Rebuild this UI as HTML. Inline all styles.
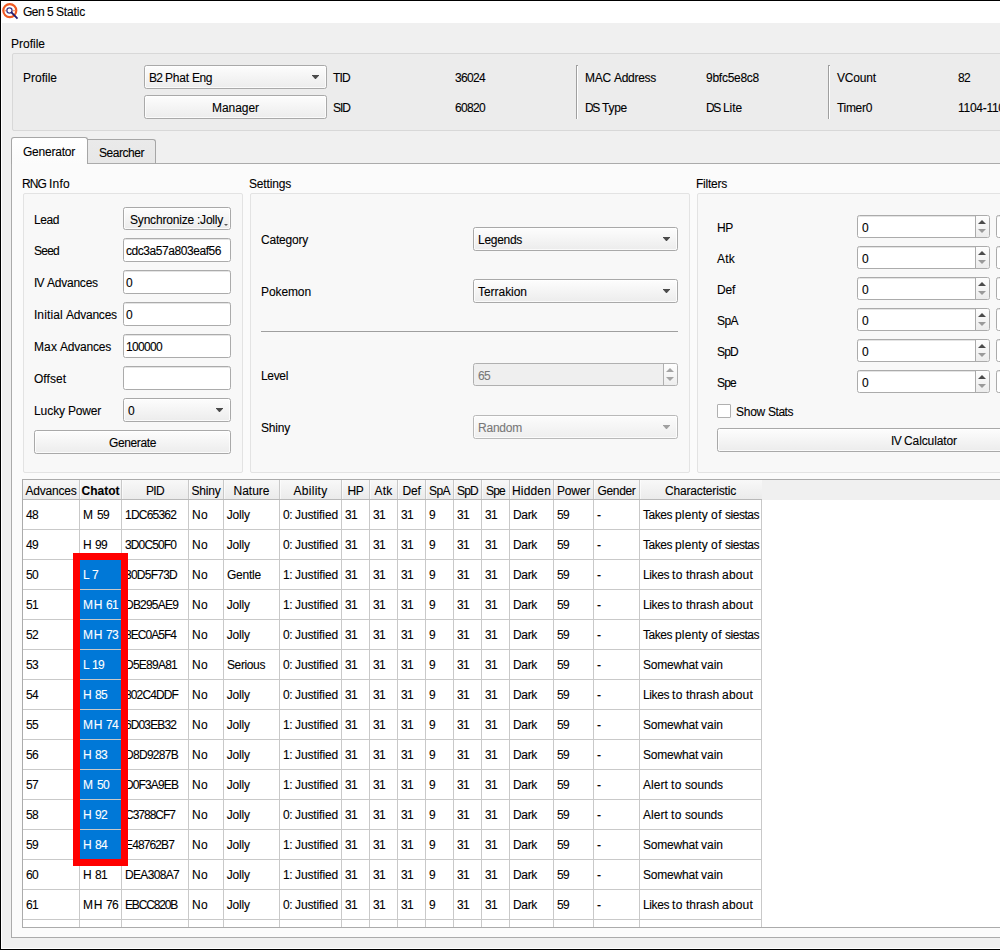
<!DOCTYPE html>
<html>
<head>
<meta charset="utf-8">
<title>Gen 5 Static</title>
<style>
html,body{margin:0;padding:0;}
body{width:1000px;height:950px;overflow:hidden;position:relative;background:#f0f0f0;font-family:"Liberation Sans",sans-serif;font-size:12px;color:#000;}
div{position:absolute;box-sizing:border-box;}
.t{line-height:16px;height:16px;white-space:nowrap;-webkit-text-stroke:0.1px currentColor;}
.t span{display:inline-block;height:16px;vertical-align:top;overflow:visible;}
.btn{border:1px solid #a9a9a9;border-radius:2.5px;background:linear-gradient(#fdfdfd,#ececec);box-shadow:inset 0 0 0 1px rgba(255,255,255,0.75);}
.edit{border:1px solid #ababab;border-radius:2.5px;background:#fff;box-shadow:inset 0 1px 0 #e4e4e4;}
.gb{border:1px solid #d8d8d8;border-radius:2px;background:#ececec;}
.gbp{border:1px solid #e3e3e3;border-radius:2px;background:#f8f8f8;}
.dis{border-color:#c6c6c6;background:linear-gradient(#f9f9f9,#efefef);}
.arr{width:0;height:0;border-left:4px solid transparent;border-right:4px solid transparent;border-top:4px solid #4b4b4b;}
.arr7{width:7px;height:4px;background:#4b4b4b;clip-path:polygon(0 0,7px 0,7px 0.6px,3.9px 4px,3.1px 4px,0 0.6px);}
.arru{width:0;height:0;border-left:4px solid transparent;border-right:4px solid transparent;border-bottom:4px solid #4b4b4b;}
.vl{width:1px;background:#c9c9c9;}
.hl{height:1px;background:#c9c9c9;}
</style>
</head>
<body>
<div class="" style="left:0px;top:0px;width:1000px;height:23px;background:#fff;"></div>
<div class="" style="left:0px;top:0px;width:1000px;height:1px;background:#000;"></div>
<div class="" style="left:1px;top:23px;width:1px;height:927px;background:#fff;"></div>
<div class="" style="left:0px;top:948px;width:1000px;height:1px;background:#fff;"></div>
<div class="" style="left:0px;top:949px;width:1000px;height:1px;background:#000;"></div>
<div class="" style="left:0px;top:0px;width:1px;height:950px;background:#000;"></div>
<svg style="position:absolute;left:0;top:0" width="24" height="24" viewBox="0 0 24 24"><circle cx="9.8" cy="10.6" r="6.5" fill="none" stroke="#f15a22" stroke-width="2.2"/><line x1="4.3" y1="10.6" x2="6.5" y2="10.6" stroke="#f7a078" stroke-width="1.5"/><line x1="12.8" y1="10.6" x2="15.2" y2="10.6" stroke="#f7a078" stroke-width="1.5"/><circle cx="9.47" cy="10.5" r="2.6" fill="#fff" stroke="#3d3889" stroke-width="1.25"/><line x1="11.5" y1="12.5" x2="16.9" y2="17.9" stroke="#221d70" stroke-width="1.8" stroke-linecap="square"/></svg>
<div class="t" style="top:4px;left:23.00px;"><span class="w" style="width:21px;letter-spacing:-0.561px">Gen</span><span class="sp" style="width:3px"></span><span class="w" style="width:6px;letter-spacing:-0.674px">5</span><span class="sp" style="width:3px"></span><span class="w" style="width:29px;letter-spacing:-0.169px">Static</span></div>
<div class="t" style="top:36px;left:11.02px;letter-spacing:-0.002px;">Profile</div>
<div class="gb" style="left:12px;top:53px;width:1100px;height:78px;"></div>
<div class="t" style="top:70px;left:23.02px;letter-spacing:-0.002px;">Profile</div>
<div class="btn" style="left:144px;top:65px;width:183px;height:24px;"></div>
<div class="t" style="top:70px;left:149.02px;"><span class="w" style="width:13px;letter-spacing:-0.839px">B2</span><span class="sp" style="width:3px"></span><span class="w" style="width:24px;letter-spacing:-0.171px">Phat</span><span class="sp" style="width:3px"></span><span class="w" style="width:20px;letter-spacing:-0.451px">Eng</span></div>
<div class="arr7" style="left:312px;top:75px;width:7px;height:4px;"></div>
<div class="btn" style="left:144px;top:95px;width:183px;height:24px;"></div>
<div class="t" style="top:100px;left:212.00px;letter-spacing:-0.052px;">Manager</div>
<div class="t" style="top:70px;left:333.00px;letter-spacing:-0.777px;">TID</div>
<div class="t" style="top:70px;left:455.00px;letter-spacing:-0.674px;">36024</div>
<div class="t" style="top:100px;left:333.00px;letter-spacing:-1.001px;">SID</div>
<div class="t" style="top:100px;left:455.00px;letter-spacing:-0.674px;">60820</div>
<div class="" style="left:576px;top:65px;width:1px;height:54px;background:#9f9f9f;"></div>
<div class="" style="left:577px;top:66px;width:1px;height:53px;background:#fff;"></div>
<div class="" style="left:577px;top:65px;width:1px;height:1px;background:#9f9f9f;"></div>
<div class="t" style="top:70px;left:585.02px;"><span class="w" style="width:26px;letter-spacing:-0.222px">MAC</span><span class="sp" style="width:3px"></span><span class="w" style="width:42px;letter-spacing:-0.289px">Address</span></div>
<div class="t" style="top:70px;left:706.00px;letter-spacing:-0.264px;">9bfc5e8c8</div>
<div class="t" style="top:100px;left:585.02px;"><span class="w" style="width:14px;letter-spacing:-1.335px">DS</span><span class="sp" style="width:3px"></span><span class="w" style="width:25px;letter-spacing:-0.254px">Type</span></div>
<div class="t" style="top:100px;left:706.02px;"><span class="w" style="width:14px;letter-spacing:-1.335px">DS</span><span class="sp" style="width:3px"></span><span class="w" style="width:19px;letter-spacing:-0.087px">Lite</span></div>
<div class="" style="left:828px;top:65px;width:1px;height:54px;background:#9f9f9f;"></div>
<div class="" style="left:829px;top:66px;width:1px;height:53px;background:#fff;"></div>
<div class="" style="left:829px;top:65px;width:1px;height:1px;background:#9f9f9f;"></div>
<div class="t" style="top:70px;left:836.95px;letter-spacing:-0.171px;">VCount</div>
<div class="t" style="top:70px;left:958.00px;letter-spacing:-0.674px;">82</div>
<div class="t" style="top:100px;left:837.00px;letter-spacing:-0.315px;">Timer0</div>
<div class="t" style="top:100px;left:958.09px;letter-spacing:-0.289px;">1104-1100</div>
<div class="" style="left:11px;top:163px;width:1100px;height:775px;background:#fbfbfb;border:1px solid #ababab;"></div>
<div class="" style="left:87px;top:139px;width:69px;height:25px;background:linear-gradient(#eaeaea,#e7e7e7);border:1px solid #a6a6a6;border-radius:0 3px 0 0;border-bottom:1px solid #ababab;"></div>
<div class="" style="left:11px;top:137px;width:77px;height:27px;background:linear-gradient(#ffffff,#fbfbfb);border:1px solid #a6a6a6;border-bottom:none;border-radius:3px 3px 0 0;"></div>
<div class="t" style="top:144px;left:23.00px;letter-spacing:-0.225px;">Generator</div>
<div class="t" style="top:145px;left:99.00px;letter-spacing:-0.461px;">Searcher</div>
<div class="t" style="top:176px;left:22.02px;"><span class="w" style="width:24px;letter-spacing:-0.889px">RNG</span><span class="sp" style="width:3px"></span><span class="w" style="width:21px;letter-spacing:0.246px">Info</span></div>
<div class="gbp" style="left:23px;top:193px;width:220px;height:280px;"></div>
<div class="t" style="top:212px;left:34.02px;letter-spacing:-0.424px;">Lead</div>
<div class="t" style="top:243px;left:34.00px;letter-spacing:-0.756px;">Seed</div>
<div class="t" style="top:275px;left:33.89px;"><span class="w" style="width:10px;letter-spacing:-0.669px">IV</span><span class="sp" style="width:3px"></span><span class="w" style="width:51px;letter-spacing:-0.212px">Advances</span></div>
<div class="t" style="top:307px;left:33.89px;"><span class="w" style="width:29px;letter-spacing:0.141px">Initial</span><span class="sp" style="width:3px"></span><span class="w" style="width:51px;letter-spacing:-0.212px">Advances</span></div>
<div class="t" style="top:339px;left:34.02px;"><span class="w" style="width:23px;letter-spacing:0.110px">Max</span><span class="sp" style="width:3px"></span><span class="w" style="width:51px;letter-spacing:-0.212px">Advances</span></div>
<div class="t" style="top:371px;left:34.00px;letter-spacing:0.035px;">Offset</div>
<div class="t" style="top:403px;left:34.02px;"><span class="w" style="width:31px;letter-spacing:-0.070px">Lucky</span><span class="sp" style="width:3px"></span><span class="w" style="width:33px;letter-spacing:-0.203px">Power</span></div>
<div class="btn" style="left:123px;top:207px;width:108px;height:23px;"></div>
<div class="t" style="top:212px;left:130.00px;"><span class="w" style="width:64px;letter-spacing:-0.185px">Synchronize</span><span class="sp" style="width:3px"></span><span class="w" style="width:26px;letter-spacing:-0.223px">:Jolly</span></div>
<div class="arr" style="left:223.5px;top:223.5px;width:0px;height:0px;border-left-width:2.5px;border-right-width:2.5px;border-top-width:2.5px;border-top-color:#5a5a5a;"></div>
<div class="edit" style="left:123px;top:238px;width:108px;height:24px;"></div>
<div class="t" style="top:243px;left:126.00px;letter-spacing:-0.443px;">cdc3a57a803eaf56</div>
<div class="edit" style="left:123px;top:270px;width:108px;height:24px;"></div>
<div class="t" style="top:275px;left:126.00px;letter-spacing:-0.674px;">0</div>
<div class="edit" style="left:123px;top:302px;width:108px;height:24px;"></div>
<div class="t" style="top:307px;left:126.00px;letter-spacing:-0.674px;">0</div>
<div class="edit" style="left:123px;top:334px;width:108px;height:24px;"></div>
<div class="t" style="top:339px;left:126.09px;letter-spacing:-0.674px;">100000</div>
<div class="edit" style="left:123px;top:366px;width:108px;height:24px;"></div>
<div class="btn" style="left:123px;top:398px;width:108px;height:24px;"></div>
<div class="t" style="top:403px;left:128.00px;letter-spacing:-0.674px;">0</div>
<div class="arr7" style="left:216px;top:408px;width:7px;height:4px;"></div>
<div class="btn" style="left:34px;top:430px;width:197px;height:24px;"></div>
<div class="t" style="top:435px;left:109.00px;letter-spacing:-0.379px;">Generate</div>
<div class="t" style="top:176px;left:249.00px;letter-spacing:-0.170px;">Settings</div>
<div class="gbp" style="left:250px;top:193px;width:440px;height:280px;"></div>
<div class="t" style="top:232px;left:261.00px;letter-spacing:-0.211px;">Category</div>
<div class="t" style="top:284px;left:261.02px;letter-spacing:-0.099px;">Pokemon</div>
<div class="t" style="top:368px;left:261.02px;letter-spacing:-0.338px;">Level</div>
<div class="t" style="top:420px;left:261.00px;letter-spacing:-0.204px;">Shiny</div>
<div class="btn" style="left:473px;top:227px;width:205px;height:24px;"></div>
<div class="t" style="top:232px;left:478.02px;letter-spacing:-0.292px;">Legends</div>
<div class="arr7" style="left:663px;top:237px;width:7px;height:4px;"></div>
<div class="btn" style="left:473px;top:279px;width:205px;height:24px;"></div>
<div class="t" style="top:284px;left:478.00px;letter-spacing:-0.039px;">Terrakion</div>
<div class="arr7" style="left:663px;top:289px;width:7px;height:4px;"></div>
<div class="" style="left:261px;top:331px;width:417px;height:1px;background:#9f9f9f;"></div>
<div class="edit" style="left:473px;top:363px;width:205px;height:23px;background:#efefef;box-shadow:none;border-color:#b0b0b0;"></div>
<div class="t" style="top:368px;left:478.00px;color:#787878;letter-spacing:-0.674px;">65</div>
<div class="" style="left:664px;top:364px;width:13px;height:21px;background:linear-gradient(#fefefe,#eeeeee);border-radius:0 2px 2px 0;"></div>
<div class="" style="left:663px;top:364px;width:1px;height:21px;background:#b0b0b0;"></div>
<div class="arru" style="left:666px;top:368px;width:0px;height:0px;border-bottom-color:#a4a4a4;"></div>
<div class="arr" style="left:666px;top:377px;width:0px;height:0px;border-top-color:#a4a4a4;"></div>
<div class="btn" style="left:473px;top:415px;width:205px;height:24px;border-color:#b9b9b9;background:linear-gradient(#fcfcfc,#eeeeee);"></div>
<div class="t" style="top:420px;left:478.02px;color:#787878;letter-spacing:-0.226px;">Random</div>
<div class="arr7" style="left:663px;top:425px;width:7px;height:4px;background:#a0a0a0;"></div>
<div class="t" style="top:176px;left:696.02px;letter-spacing:-0.238px;">Filters</div>
<div class="gbp" style="left:697px;top:193px;width:500px;height:280px;"></div>
<div class="t" style="top:220px;left:717.02px;letter-spacing:-0.335px;">HP</div>
<div class="edit" style="left:857px;top:215px;width:133px;height:23px;"></div>
<div class="" style="left:976px;top:216px;width:13px;height:21px;background:linear-gradient(#fdfdfd,#ececec);border-radius:0 2px 2px 0;"></div>
<div class="" style="left:975px;top:216px;width:1px;height:21px;background:#ababab;"></div>
<div class="arru" style="left:978px;top:220px;width:0px;height:0px;"></div>
<div class="arr" style="left:978px;top:229px;width:0px;height:0px;border-top-color:#9a9a9a;"></div>
<div class="t" style="top:220px;left:862.00px;letter-spacing:-0.674px;">0</div>
<div class="edit" style="left:996px;top:215px;width:133px;height:23px;"></div>
<div class="t" style="top:251px;left:716.98px;letter-spacing:0.221px;">Atk</div>
<div class="edit" style="left:857px;top:246px;width:133px;height:23px;"></div>
<div class="" style="left:976px;top:247px;width:13px;height:21px;background:linear-gradient(#fdfdfd,#ececec);border-radius:0 2px 2px 0;"></div>
<div class="" style="left:975px;top:247px;width:1px;height:21px;background:#ababab;"></div>
<div class="arru" style="left:978px;top:251px;width:0px;height:0px;"></div>
<div class="arr" style="left:978px;top:260px;width:0px;height:0px;border-top-color:#9a9a9a;"></div>
<div class="t" style="top:251px;left:862.00px;letter-spacing:-0.674px;">0</div>
<div class="edit" style="left:996px;top:246px;width:133px;height:23px;"></div>
<div class="t" style="top:282px;left:717.02px;letter-spacing:-0.225px;">Def</div>
<div class="edit" style="left:857px;top:277px;width:133px;height:23px;"></div>
<div class="" style="left:976px;top:278px;width:13px;height:21px;background:linear-gradient(#fdfdfd,#ececec);border-radius:0 2px 2px 0;"></div>
<div class="" style="left:975px;top:278px;width:1px;height:21px;background:#ababab;"></div>
<div class="arru" style="left:978px;top:282px;width:0px;height:0px;"></div>
<div class="arr" style="left:978px;top:291px;width:0px;height:0px;border-top-color:#9a9a9a;"></div>
<div class="t" style="top:282px;left:862.00px;letter-spacing:-0.674px;">0</div>
<div class="edit" style="left:996px;top:277px;width:133px;height:23px;"></div>
<div class="t" style="top:313px;left:717.00px;letter-spacing:-0.561px;">SpA</div>
<div class="edit" style="left:857px;top:308px;width:133px;height:23px;"></div>
<div class="" style="left:976px;top:309px;width:13px;height:21px;background:linear-gradient(#fdfdfd,#ececec);border-radius:0 2px 2px 0;"></div>
<div class="" style="left:975px;top:309px;width:1px;height:21px;background:#ababab;"></div>
<div class="arru" style="left:978px;top:313px;width:0px;height:0px;"></div>
<div class="arr" style="left:978px;top:322px;width:0px;height:0px;border-top-color:#9a9a9a;"></div>
<div class="t" style="top:313px;left:862.00px;letter-spacing:-0.674px;">0</div>
<div class="edit" style="left:996px;top:308px;width:133px;height:23px;"></div>
<div class="t" style="top:344px;left:717.00px;letter-spacing:-0.781px;">SpD</div>
<div class="edit" style="left:857px;top:339px;width:133px;height:23px;"></div>
<div class="" style="left:976px;top:340px;width:13px;height:21px;background:linear-gradient(#fdfdfd,#ececec);border-radius:0 2px 2px 0;"></div>
<div class="" style="left:975px;top:340px;width:1px;height:21px;background:#ababab;"></div>
<div class="arru" style="left:978px;top:344px;width:0px;height:0px;"></div>
<div class="arr" style="left:978px;top:353px;width:0px;height:0px;border-top-color:#9a9a9a;"></div>
<div class="t" style="top:344px;left:862.00px;letter-spacing:-0.674px;">0</div>
<div class="edit" style="left:996px;top:339px;width:133px;height:23px;"></div>
<div class="t" style="top:375px;left:717.00px;letter-spacing:-0.784px;">Spe</div>
<div class="edit" style="left:857px;top:370px;width:133px;height:23px;"></div>
<div class="" style="left:976px;top:371px;width:13px;height:21px;background:linear-gradient(#fdfdfd,#ececec);border-radius:0 2px 2px 0;"></div>
<div class="" style="left:975px;top:371px;width:1px;height:21px;background:#ababab;"></div>
<div class="arru" style="left:978px;top:375px;width:0px;height:0px;"></div>
<div class="arr" style="left:978px;top:384px;width:0px;height:0px;border-top-color:#9a9a9a;"></div>
<div class="t" style="top:375px;left:862.00px;letter-spacing:-0.674px;">0</div>
<div class="edit" style="left:996px;top:370px;width:133px;height:23px;"></div>
<div class="" style="left:717px;top:404px;width:14px;height:14px;background:#fff;border:1px solid #b0b0b0;border-radius:1px;"></div>
<div class="t" style="top:404px;left:736.00px;"><span class="w" style="width:29px;letter-spacing:-0.254px">Show</span><span class="sp" style="width:3px"></span><span class="w" style="width:25px;letter-spacing:-0.469px">Stats</span></div>
<div class="btn" style="left:717px;top:428px;width:414px;height:24px;"></div>
<div class="t" style="top:433px;left:891.00px;"><span class="w" style="width:10px;letter-spacing:-0.669px">IV</span><span class="sp" style="width:3px"></span><span class="w" style="width:53px;letter-spacing:-0.102px">Calculator</span></div>
<div class="" style="left:22px;top:479px;width:1100px;height:449px;background:#fff;border:1px solid #ababab;"></div>
<div class="" style="left:23px;top:480px;width:739px;height:19px;background:linear-gradient(#f8f8f8,#ebebeb);"></div>
<div class="" style="left:762px;top:480px;width:238px;height:20px;background:#f0f0f0;"></div>
<div class="" style="left:23px;top:499px;width:739px;height:1px;background:#b9b9b9;"></div>
<div class="" style="left:79px;top:480px;width:1px;height:19px;background:#c8c8c8;"></div>
<div class="" style="left:80px;top:480px;width:1px;height:19px;background:rgba(255,255,255,0.6);"></div>
<div class="t" style="top:483px;left:25.50px;letter-spacing:-0.212px;">Advances</div>
<div class="" style="left:121px;top:480px;width:1px;height:19px;background:#c8c8c8;"></div>
<div class="" style="left:122px;top:480px;width:1px;height:19px;background:rgba(255,255,255,0.6);"></div>
<div class="t" style="top:483px;left:81.50px;font-weight:bold;letter-spacing:0.001px;">Chatot</div>
<div class="" style="left:188px;top:480px;width:1px;height:19px;background:#c8c8c8;"></div>
<div class="" style="left:189px;top:480px;width:1px;height:19px;background:rgba(255,255,255,0.6);"></div>
<div class="t" style="top:483px;left:146.00px;letter-spacing:-0.668px;">PID</div>
<div class="" style="left:223px;top:480px;width:1px;height:19px;background:#c8c8c8;"></div>
<div class="" style="left:224px;top:480px;width:1px;height:19px;background:rgba(255,255,255,0.6);"></div>
<div class="t" style="top:483px;left:191.50px;letter-spacing:-0.204px;">Shiny</div>
<div class="" style="left:279px;top:480px;width:1px;height:19px;background:#c8c8c8;"></div>
<div class="" style="left:280px;top:480px;width:1px;height:19px;background:rgba(255,255,255,0.6);"></div>
<div class="t" style="top:483px;left:233.50px;letter-spacing:-0.003px;">Nature</div>
<div class="" style="left:341px;top:480px;width:1px;height:19px;background:#c8c8c8;"></div>
<div class="" style="left:342px;top:480px;width:1px;height:19px;background:rgba(255,255,255,0.6);"></div>
<div class="t" style="top:483px;left:293.50px;letter-spacing:0.284px;">Ability</div>
<div class="" style="left:369px;top:480px;width:1px;height:19px;background:#c8c8c8;"></div>
<div class="" style="left:370px;top:480px;width:1px;height:19px;background:rgba(255,255,255,0.6);"></div>
<div class="t" style="top:483px;left:347.50px;letter-spacing:-0.335px;">HP</div>
<div class="" style="left:397px;top:480px;width:1px;height:19px;background:#c8c8c8;"></div>
<div class="" style="left:398px;top:480px;width:1px;height:19px;background:rgba(255,255,255,0.6);"></div>
<div class="t" style="top:483px;left:374.50px;letter-spacing:0.221px;">Atk</div>
<div class="" style="left:425px;top:480px;width:1px;height:19px;background:#c8c8c8;"></div>
<div class="" style="left:426px;top:480px;width:1px;height:19px;background:rgba(255,255,255,0.6);"></div>
<div class="t" style="top:483px;left:402.50px;letter-spacing:-0.225px;">Def</div>
<div class="" style="left:453px;top:480px;width:1px;height:19px;background:#c8c8c8;"></div>
<div class="" style="left:454px;top:480px;width:1px;height:19px;background:rgba(255,255,255,0.6);"></div>
<div class="t" style="top:483px;left:429.00px;letter-spacing:-0.561px;">SpA</div>
<div class="" style="left:481px;top:480px;width:1px;height:19px;background:#c8c8c8;"></div>
<div class="" style="left:482px;top:480px;width:1px;height:19px;background:rgba(255,255,255,0.6);"></div>
<div class="t" style="top:483px;left:457.00px;letter-spacing:-0.781px;">SpD</div>
<div class="" style="left:509px;top:480px;width:1px;height:19px;background:#c8c8c8;"></div>
<div class="" style="left:510px;top:480px;width:1px;height:19px;background:rgba(255,255,255,0.6);"></div>
<div class="t" style="top:483px;left:486.00px;letter-spacing:-0.784px;">Spe</div>
<div class="" style="left:553px;top:480px;width:1px;height:19px;background:#c8c8c8;"></div>
<div class="" style="left:554px;top:480px;width:1px;height:19px;background:rgba(255,255,255,0.6);"></div>
<div class="t" style="top:483px;left:512.00px;letter-spacing:0.162px;">Hidden</div>
<div class="" style="left:593px;top:480px;width:1px;height:19px;background:#c8c8c8;"></div>
<div class="" style="left:594px;top:480px;width:1px;height:19px;background:rgba(255,255,255,0.6);"></div>
<div class="t" style="top:483px;left:557.00px;letter-spacing:-0.203px;">Power</div>
<div class="" style="left:639px;top:480px;width:1px;height:19px;background:#c8c8c8;"></div>
<div class="" style="left:640px;top:480px;width:1px;height:19px;background:rgba(255,255,255,0.6);"></div>
<div class="t" style="top:483px;left:597.50px;letter-spacing:-0.338px;">Gender</div>
<div class="t" style="top:483px;left:665.00px;letter-spacing:-0.168px;">Characteristic</div>
<div class="vl" style="left:79px;top:500px;width:1px;height:427px;"></div>
<div class="vl" style="left:121px;top:500px;width:1px;height:427px;"></div>
<div class="vl" style="left:188px;top:500px;width:1px;height:427px;"></div>
<div class="vl" style="left:223px;top:500px;width:1px;height:427px;"></div>
<div class="vl" style="left:279px;top:500px;width:1px;height:427px;"></div>
<div class="vl" style="left:341px;top:500px;width:1px;height:427px;"></div>
<div class="vl" style="left:369px;top:500px;width:1px;height:427px;"></div>
<div class="vl" style="left:397px;top:500px;width:1px;height:427px;"></div>
<div class="vl" style="left:425px;top:500px;width:1px;height:427px;"></div>
<div class="vl" style="left:453px;top:500px;width:1px;height:427px;"></div>
<div class="vl" style="left:481px;top:500px;width:1px;height:427px;"></div>
<div class="vl" style="left:509px;top:500px;width:1px;height:427px;"></div>
<div class="vl" style="left:553px;top:500px;width:1px;height:427px;"></div>
<div class="vl" style="left:593px;top:500px;width:1px;height:427px;"></div>
<div class="vl" style="left:639px;top:500px;width:1px;height:427px;"></div>
<div class="vl" style="left:761px;top:500px;width:1px;height:427px;"></div>
<div class="hl" style="left:23px;top:529px;width:739px;height:1px;"></div>
<div class="hl" style="left:23px;top:559px;width:739px;height:1px;"></div>
<div class="hl" style="left:23px;top:589px;width:739px;height:1px;"></div>
<div class="hl" style="left:23px;top:619px;width:739px;height:1px;"></div>
<div class="hl" style="left:23px;top:649px;width:739px;height:1px;"></div>
<div class="hl" style="left:23px;top:679px;width:739px;height:1px;"></div>
<div class="hl" style="left:23px;top:709px;width:739px;height:1px;"></div>
<div class="hl" style="left:23px;top:739px;width:739px;height:1px;"></div>
<div class="hl" style="left:23px;top:769px;width:739px;height:1px;"></div>
<div class="hl" style="left:23px;top:799px;width:739px;height:1px;"></div>
<div class="hl" style="left:23px;top:829px;width:739px;height:1px;"></div>
<div class="hl" style="left:23px;top:859px;width:739px;height:1px;"></div>
<div class="hl" style="left:23px;top:889px;width:739px;height:1px;"></div>
<div class="hl" style="left:23px;top:919px;width:739px;height:1px;"></div>
<div class="" style="left:80px;top:560px;width:41px;height:29px;background:#0078d7;"></div>
<div class="" style="left:80px;top:590px;width:41px;height:29px;background:#0078d7;"></div>
<div class="" style="left:80px;top:620px;width:41px;height:29px;background:#0078d7;"></div>
<div class="" style="left:80px;top:650px;width:41px;height:29px;background:#0078d7;"></div>
<div class="" style="left:80px;top:680px;width:41px;height:29px;background:#0078d7;"></div>
<div class="" style="left:80px;top:710px;width:41px;height:29px;background:#0078d7;"></div>
<div class="" style="left:80px;top:740px;width:41px;height:29px;background:#0078d7;"></div>
<div class="" style="left:80px;top:770px;width:41px;height:29px;background:#0078d7;"></div>
<div class="" style="left:80px;top:800px;width:41px;height:29px;background:#0078d7;"></div>
<div class="" style="left:80px;top:830px;width:41px;height:29px;background:#0078d7;"></div>
<div class="t" style="top:507px;left:26.00px;letter-spacing:-0.674px;">48</div>
<div class="t" style="top:507px;left:83.02px;"><span class="w" style="width:11px;letter-spacing:1.004px">M</span><span class="sp" style="width:3px"></span><span class="w" style="width:12px;letter-spacing:-0.674px">59</span></div>
<div class="t" style="top:507px;left:125.09px;letter-spacing:-0.797px;">1DC65362</div>
<div class="t" style="top:507px;left:192.02px;letter-spacing:0.330px;">No</div>
<div class="t" style="top:507px;left:226.81px;letter-spacing:-0.201px;">Jolly</div>
<div class="t" style="top:507px;left:283.00px;"><span class="w" style="width:9px;letter-spacing:-0.504px">0:</span><span class="sp" style="width:3px"></span><span class="w" style="width:43px;letter-spacing:-0.113px">Justified</span></div>
<div class="t" style="top:507px;left:345.00px;letter-spacing:-0.674px;">31</div>
<div class="t" style="top:507px;left:373.00px;letter-spacing:-0.674px;">31</div>
<div class="t" style="top:507px;left:401.00px;letter-spacing:-0.674px;">31</div>
<div class="t" style="top:507px;left:429.00px;letter-spacing:-0.674px;">9</div>
<div class="t" style="top:507px;left:457.00px;letter-spacing:-0.674px;">31</div>
<div class="t" style="top:507px;left:485.00px;letter-spacing:-0.674px;">31</div>
<div class="t" style="top:507px;left:513.02px;letter-spacing:-0.334px;">Dark</div>
<div class="t" style="top:507px;left:557.00px;letter-spacing:-0.674px;">59</div>
<div class="t" style="top:507px;left:597.00px;letter-spacing:1.004px;">-</div>
<div class="t" style="top:507px;left:643.00px;"><span class="w" style="width:29px;letter-spacing:-0.470px">Takes</span><span class="sp" style="width:3px"></span><span class="w" style="width:33px;letter-spacing:0.163px">plenty</span><span class="sp" style="width:3px"></span><span class="w" style="width:11px;letter-spacing:0.496px">of</span><span class="sp" style="width:3px"></span><span class="w" style="width:34px;letter-spacing:-0.478px">siestas</span></div>
<div class="t" style="top:537px;left:26.00px;letter-spacing:-0.674px;">49</div>
<div class="t" style="top:537px;left:83.02px;"><span class="w" style="width:9px;letter-spacing:0.334px">H</span><span class="sp" style="width:3px"></span><span class="w" style="width:12px;letter-spacing:-0.674px">99</span></div>
<div class="t" style="top:537px;left:125.00px;letter-spacing:-0.879px;">3D0C50F0</div>
<div class="t" style="top:537px;left:192.02px;letter-spacing:0.330px;">No</div>
<div class="t" style="top:537px;left:226.81px;letter-spacing:-0.201px;">Jolly</div>
<div class="t" style="top:537px;left:283.00px;"><span class="w" style="width:9px;letter-spacing:-0.504px">0:</span><span class="sp" style="width:3px"></span><span class="w" style="width:43px;letter-spacing:-0.113px">Justified</span></div>
<div class="t" style="top:537px;left:345.00px;letter-spacing:-0.674px;">31</div>
<div class="t" style="top:537px;left:373.00px;letter-spacing:-0.674px;">31</div>
<div class="t" style="top:537px;left:401.00px;letter-spacing:-0.674px;">31</div>
<div class="t" style="top:537px;left:429.00px;letter-spacing:-0.674px;">9</div>
<div class="t" style="top:537px;left:457.00px;letter-spacing:-0.674px;">31</div>
<div class="t" style="top:537px;left:485.00px;letter-spacing:-0.674px;">31</div>
<div class="t" style="top:537px;left:513.02px;letter-spacing:-0.334px;">Dark</div>
<div class="t" style="top:537px;left:557.00px;letter-spacing:-0.674px;">59</div>
<div class="t" style="top:537px;left:597.00px;letter-spacing:1.004px;">-</div>
<div class="t" style="top:537px;left:643.00px;"><span class="w" style="width:29px;letter-spacing:-0.470px">Takes</span><span class="sp" style="width:3px"></span><span class="w" style="width:33px;letter-spacing:0.163px">plenty</span><span class="sp" style="width:3px"></span><span class="w" style="width:11px;letter-spacing:0.496px">of</span><span class="sp" style="width:3px"></span><span class="w" style="width:34px;letter-spacing:-0.478px">siestas</span></div>
<div class="t" style="top:567px;left:26.00px;letter-spacing:-0.674px;">50</div>
<div class="t" style="top:567px;left:83.02px;color:#fff;"><span class="w" style="width:6px;letter-spacing:-0.674px">L</span><span class="sp" style="width:3px"></span><span class="w" style="width:6px;letter-spacing:-0.674px">7</span></div>
<div class="t" style="top:567px;left:125.00px;letter-spacing:-0.754px;">30D5F73D</div>
<div class="t" style="top:567px;left:192.02px;letter-spacing:0.330px;">No</div>
<div class="t" style="top:567px;left:227.00px;letter-spacing:-0.226px;">Gentle</div>
<div class="t" style="top:567px;left:283.09px;"><span class="w" style="width:9px;letter-spacing:-0.504px">1:</span><span class="sp" style="width:3px"></span><span class="w" style="width:43px;letter-spacing:-0.113px">Justified</span></div>
<div class="t" style="top:567px;left:345.00px;letter-spacing:-0.674px;">31</div>
<div class="t" style="top:567px;left:373.00px;letter-spacing:-0.674px;">31</div>
<div class="t" style="top:567px;left:401.00px;letter-spacing:-0.674px;">31</div>
<div class="t" style="top:567px;left:429.00px;letter-spacing:-0.674px;">9</div>
<div class="t" style="top:567px;left:457.00px;letter-spacing:-0.674px;">31</div>
<div class="t" style="top:567px;left:485.00px;letter-spacing:-0.674px;">31</div>
<div class="t" style="top:567px;left:513.02px;letter-spacing:-0.334px;">Dark</div>
<div class="t" style="top:567px;left:557.00px;letter-spacing:-0.674px;">59</div>
<div class="t" style="top:567px;left:597.00px;letter-spacing:1.004px;">-</div>
<div class="t" style="top:567px;left:643.02px;"><span class="w" style="width:26px;letter-spacing:-0.403px">Likes</span><span class="sp" style="width:3px"></span><span class="w" style="width:11px;letter-spacing:0.496px">to</span><span class="sp" style="width:3px"></span><span class="w" style="width:33px;letter-spacing:-0.059px">thrash</span><span class="sp" style="width:3px"></span><span class="w" style="width:31px;letter-spacing:0.194px">about</span></div>
<div class="t" style="top:597px;left:26.00px;letter-spacing:-0.674px;">51</div>
<div class="t" style="top:597px;left:83.02px;color:#fff;"><span class="w" style="width:20px;letter-spacing:0.669px">MH</span><span class="sp" style="width:3px"></span><span class="w" style="width:12px;letter-spacing:-0.674px">61</span></div>
<div class="t" style="top:597px;left:125.02px;letter-spacing:-0.797px;">DB295AE9</div>
<div class="t" style="top:597px;left:192.02px;letter-spacing:0.330px;">No</div>
<div class="t" style="top:597px;left:226.81px;letter-spacing:-0.201px;">Jolly</div>
<div class="t" style="top:597px;left:283.09px;"><span class="w" style="width:9px;letter-spacing:-0.504px">1:</span><span class="sp" style="width:3px"></span><span class="w" style="width:43px;letter-spacing:-0.113px">Justified</span></div>
<div class="t" style="top:597px;left:345.00px;letter-spacing:-0.674px;">31</div>
<div class="t" style="top:597px;left:373.00px;letter-spacing:-0.674px;">31</div>
<div class="t" style="top:597px;left:401.00px;letter-spacing:-0.674px;">31</div>
<div class="t" style="top:597px;left:429.00px;letter-spacing:-0.674px;">9</div>
<div class="t" style="top:597px;left:457.00px;letter-spacing:-0.674px;">31</div>
<div class="t" style="top:597px;left:485.00px;letter-spacing:-0.674px;">31</div>
<div class="t" style="top:597px;left:513.02px;letter-spacing:-0.334px;">Dark</div>
<div class="t" style="top:597px;left:557.00px;letter-spacing:-0.674px;">59</div>
<div class="t" style="top:597px;left:597.00px;letter-spacing:1.004px;">-</div>
<div class="t" style="top:597px;left:643.02px;"><span class="w" style="width:26px;letter-spacing:-0.403px">Likes</span><span class="sp" style="width:3px"></span><span class="w" style="width:11px;letter-spacing:0.496px">to</span><span class="sp" style="width:3px"></span><span class="w" style="width:33px;letter-spacing:-0.059px">thrash</span><span class="sp" style="width:3px"></span><span class="w" style="width:31px;letter-spacing:0.194px">about</span></div>
<div class="t" style="top:627px;left:26.00px;letter-spacing:-0.674px;">52</div>
<div class="t" style="top:627px;left:83.02px;color:#fff;"><span class="w" style="width:20px;letter-spacing:0.669px">MH</span><span class="sp" style="width:3px"></span><span class="w" style="width:12px;letter-spacing:-0.674px">73</span></div>
<div class="t" style="top:627px;left:125.00px;letter-spacing:-0.962px;">8EC0A5F4</div>
<div class="t" style="top:627px;left:192.02px;letter-spacing:0.330px;">No</div>
<div class="t" style="top:627px;left:226.81px;letter-spacing:-0.201px;">Jolly</div>
<div class="t" style="top:627px;left:283.00px;"><span class="w" style="width:9px;letter-spacing:-0.504px">0:</span><span class="sp" style="width:3px"></span><span class="w" style="width:43px;letter-spacing:-0.113px">Justified</span></div>
<div class="t" style="top:627px;left:345.00px;letter-spacing:-0.674px;">31</div>
<div class="t" style="top:627px;left:373.00px;letter-spacing:-0.674px;">31</div>
<div class="t" style="top:627px;left:401.00px;letter-spacing:-0.674px;">31</div>
<div class="t" style="top:627px;left:429.00px;letter-spacing:-0.674px;">9</div>
<div class="t" style="top:627px;left:457.00px;letter-spacing:-0.674px;">31</div>
<div class="t" style="top:627px;left:485.00px;letter-spacing:-0.674px;">31</div>
<div class="t" style="top:627px;left:513.02px;letter-spacing:-0.334px;">Dark</div>
<div class="t" style="top:627px;left:557.00px;letter-spacing:-0.674px;">59</div>
<div class="t" style="top:627px;left:597.00px;letter-spacing:1.004px;">-</div>
<div class="t" style="top:627px;left:643.00px;"><span class="w" style="width:29px;letter-spacing:-0.470px">Takes</span><span class="sp" style="width:3px"></span><span class="w" style="width:33px;letter-spacing:0.163px">plenty</span><span class="sp" style="width:3px"></span><span class="w" style="width:11px;letter-spacing:0.496px">of</span><span class="sp" style="width:3px"></span><span class="w" style="width:34px;letter-spacing:-0.478px">siestas</span></div>
<div class="t" style="top:657px;left:26.00px;letter-spacing:-0.674px;">53</div>
<div class="t" style="top:657px;left:83.02px;color:#fff;"><span class="w" style="width:6px;letter-spacing:-0.674px">L</span><span class="sp" style="width:3px"></span><span class="w" style="width:12px;letter-spacing:-0.674px">19</span></div>
<div class="t" style="top:657px;left:125.02px;letter-spacing:-0.755px;">D5E89A81</div>
<div class="t" style="top:657px;left:192.02px;letter-spacing:0.330px;">No</div>
<div class="t" style="top:657px;left:227.00px;letter-spacing:-0.384px;">Serious</div>
<div class="t" style="top:657px;left:283.00px;"><span class="w" style="width:9px;letter-spacing:-0.504px">0:</span><span class="sp" style="width:3px"></span><span class="w" style="width:43px;letter-spacing:-0.113px">Justified</span></div>
<div class="t" style="top:657px;left:345.00px;letter-spacing:-0.674px;">31</div>
<div class="t" style="top:657px;left:373.00px;letter-spacing:-0.674px;">31</div>
<div class="t" style="top:657px;left:401.00px;letter-spacing:-0.674px;">31</div>
<div class="t" style="top:657px;left:429.00px;letter-spacing:-0.674px;">9</div>
<div class="t" style="top:657px;left:457.00px;letter-spacing:-0.674px;">31</div>
<div class="t" style="top:657px;left:485.00px;letter-spacing:-0.674px;">31</div>
<div class="t" style="top:657px;left:513.02px;letter-spacing:-0.334px;">Dark</div>
<div class="t" style="top:657px;left:557.00px;letter-spacing:-0.674px;">59</div>
<div class="t" style="top:657px;left:597.00px;letter-spacing:1.004px;">-</div>
<div class="t" style="top:657px;left:643.00px;"><span class="w" style="width:55px;letter-spacing:-0.212px">Somewhat</span><span class="sp" style="width:3px"></span><span class="w" style="width:22px;letter-spacing:-0.003px">vain</span></div>
<div class="t" style="top:687px;left:26.00px;letter-spacing:-0.674px;">54</div>
<div class="t" style="top:687px;left:83.02px;color:#fff;"><span class="w" style="width:9px;letter-spacing:0.334px">H</span><span class="sp" style="width:3px"></span><span class="w" style="width:12px;letter-spacing:-0.674px">85</span></div>
<div class="t" style="top:687px;left:125.00px;letter-spacing:-0.878px;">802C4DDF</div>
<div class="t" style="top:687px;left:192.02px;letter-spacing:0.330px;">No</div>
<div class="t" style="top:687px;left:226.81px;letter-spacing:-0.201px;">Jolly</div>
<div class="t" style="top:687px;left:283.00px;"><span class="w" style="width:9px;letter-spacing:-0.504px">0:</span><span class="sp" style="width:3px"></span><span class="w" style="width:43px;letter-spacing:-0.113px">Justified</span></div>
<div class="t" style="top:687px;left:345.00px;letter-spacing:-0.674px;">31</div>
<div class="t" style="top:687px;left:373.00px;letter-spacing:-0.674px;">31</div>
<div class="t" style="top:687px;left:401.00px;letter-spacing:-0.674px;">31</div>
<div class="t" style="top:687px;left:429.00px;letter-spacing:-0.674px;">9</div>
<div class="t" style="top:687px;left:457.00px;letter-spacing:-0.674px;">31</div>
<div class="t" style="top:687px;left:485.00px;letter-spacing:-0.674px;">31</div>
<div class="t" style="top:687px;left:513.02px;letter-spacing:-0.334px;">Dark</div>
<div class="t" style="top:687px;left:557.00px;letter-spacing:-0.674px;">59</div>
<div class="t" style="top:687px;left:597.00px;letter-spacing:1.004px;">-</div>
<div class="t" style="top:687px;left:643.02px;"><span class="w" style="width:26px;letter-spacing:-0.403px">Likes</span><span class="sp" style="width:3px"></span><span class="w" style="width:11px;letter-spacing:0.496px">to</span><span class="sp" style="width:3px"></span><span class="w" style="width:33px;letter-spacing:-0.059px">thrash</span><span class="sp" style="width:3px"></span><span class="w" style="width:31px;letter-spacing:0.194px">about</span></div>
<div class="t" style="top:717px;left:26.00px;letter-spacing:-0.674px;">55</div>
<div class="t" style="top:717px;left:83.02px;color:#fff;"><span class="w" style="width:20px;letter-spacing:0.669px">MH</span><span class="sp" style="width:3px"></span><span class="w" style="width:12px;letter-spacing:-0.674px">74</span></div>
<div class="t" style="top:717px;left:125.00px;letter-spacing:-0.880px;">6D03EB32</div>
<div class="t" style="top:717px;left:192.02px;letter-spacing:0.330px;">No</div>
<div class="t" style="top:717px;left:226.81px;letter-spacing:-0.201px;">Jolly</div>
<div class="t" style="top:717px;left:283.09px;"><span class="w" style="width:9px;letter-spacing:-0.504px">1:</span><span class="sp" style="width:3px"></span><span class="w" style="width:43px;letter-spacing:-0.113px">Justified</span></div>
<div class="t" style="top:717px;left:345.00px;letter-spacing:-0.674px;">31</div>
<div class="t" style="top:717px;left:373.00px;letter-spacing:-0.674px;">31</div>
<div class="t" style="top:717px;left:401.00px;letter-spacing:-0.674px;">31</div>
<div class="t" style="top:717px;left:429.00px;letter-spacing:-0.674px;">9</div>
<div class="t" style="top:717px;left:457.00px;letter-spacing:-0.674px;">31</div>
<div class="t" style="top:717px;left:485.00px;letter-spacing:-0.674px;">31</div>
<div class="t" style="top:717px;left:513.02px;letter-spacing:-0.334px;">Dark</div>
<div class="t" style="top:717px;left:557.00px;letter-spacing:-0.674px;">59</div>
<div class="t" style="top:717px;left:597.00px;letter-spacing:1.004px;">-</div>
<div class="t" style="top:717px;left:643.00px;"><span class="w" style="width:55px;letter-spacing:-0.212px">Somewhat</span><span class="sp" style="width:3px"></span><span class="w" style="width:22px;letter-spacing:-0.003px">vain</span></div>
<div class="t" style="top:747px;left:26.00px;letter-spacing:-0.674px;">56</div>
<div class="t" style="top:747px;left:83.02px;color:#fff;"><span class="w" style="width:9px;letter-spacing:0.334px">H</span><span class="sp" style="width:3px"></span><span class="w" style="width:12px;letter-spacing:-0.674px">83</span></div>
<div class="t" style="top:747px;left:125.02px;letter-spacing:-0.713px;">D8D9287B</div>
<div class="t" style="top:747px;left:192.02px;letter-spacing:0.330px;">No</div>
<div class="t" style="top:747px;left:226.81px;letter-spacing:-0.201px;">Jolly</div>
<div class="t" style="top:747px;left:283.09px;"><span class="w" style="width:9px;letter-spacing:-0.504px">1:</span><span class="sp" style="width:3px"></span><span class="w" style="width:43px;letter-spacing:-0.113px">Justified</span></div>
<div class="t" style="top:747px;left:345.00px;letter-spacing:-0.674px;">31</div>
<div class="t" style="top:747px;left:373.00px;letter-spacing:-0.674px;">31</div>
<div class="t" style="top:747px;left:401.00px;letter-spacing:-0.674px;">31</div>
<div class="t" style="top:747px;left:429.00px;letter-spacing:-0.674px;">9</div>
<div class="t" style="top:747px;left:457.00px;letter-spacing:-0.674px;">31</div>
<div class="t" style="top:747px;left:485.00px;letter-spacing:-0.674px;">31</div>
<div class="t" style="top:747px;left:513.02px;letter-spacing:-0.334px;">Dark</div>
<div class="t" style="top:747px;left:557.00px;letter-spacing:-0.674px;">59</div>
<div class="t" style="top:747px;left:597.00px;letter-spacing:1.004px;">-</div>
<div class="t" style="top:747px;left:643.00px;"><span class="w" style="width:55px;letter-spacing:-0.212px">Somewhat</span><span class="sp" style="width:3px"></span><span class="w" style="width:22px;letter-spacing:-0.003px">vain</span></div>
<div class="t" style="top:777px;left:26.00px;letter-spacing:-0.674px;">57</div>
<div class="t" style="top:777px;left:83.02px;color:#fff;"><span class="w" style="width:11px;letter-spacing:1.004px">M</span><span class="sp" style="width:3px"></span><span class="w" style="width:12px;letter-spacing:-0.674px">50</span></div>
<div class="t" style="top:777px;left:125.02px;letter-spacing:-0.879px;">D0F3A9EB</div>
<div class="t" style="top:777px;left:192.02px;letter-spacing:0.330px;">No</div>
<div class="t" style="top:777px;left:226.81px;letter-spacing:-0.201px;">Jolly</div>
<div class="t" style="top:777px;left:283.09px;"><span class="w" style="width:9px;letter-spacing:-0.504px">1:</span><span class="sp" style="width:3px"></span><span class="w" style="width:43px;letter-spacing:-0.113px">Justified</span></div>
<div class="t" style="top:777px;left:345.00px;letter-spacing:-0.674px;">31</div>
<div class="t" style="top:777px;left:373.00px;letter-spacing:-0.674px;">31</div>
<div class="t" style="top:777px;left:401.00px;letter-spacing:-0.674px;">31</div>
<div class="t" style="top:777px;left:429.00px;letter-spacing:-0.674px;">9</div>
<div class="t" style="top:777px;left:457.00px;letter-spacing:-0.674px;">31</div>
<div class="t" style="top:777px;left:485.00px;letter-spacing:-0.674px;">31</div>
<div class="t" style="top:777px;left:513.02px;letter-spacing:-0.334px;">Dark</div>
<div class="t" style="top:777px;left:557.00px;letter-spacing:-0.674px;">59</div>
<div class="t" style="top:777px;left:597.00px;letter-spacing:1.004px;">-</div>
<div class="t" style="top:777px;left:642.98px;"><span class="w" style="width:25px;letter-spacing:0.065px">Alert</span><span class="sp" style="width:3px"></span><span class="w" style="width:11px;letter-spacing:0.496px">to</span><span class="sp" style="width:3px"></span><span class="w" style="width:38px;letter-spacing:-0.116px">sounds</span></div>
<div class="t" style="top:807px;left:26.00px;letter-spacing:-0.674px;">58</div>
<div class="t" style="top:807px;left:83.02px;color:#fff;"><span class="w" style="width:9px;letter-spacing:0.334px">H</span><span class="sp" style="width:3px"></span><span class="w" style="width:12px;letter-spacing:-0.674px">92</span></div>
<div class="t" style="top:807px;left:125.00px;letter-spacing:-1.004px;">C3788CF7</div>
<div class="t" style="top:807px;left:192.02px;letter-spacing:0.330px;">No</div>
<div class="t" style="top:807px;left:226.81px;letter-spacing:-0.201px;">Jolly</div>
<div class="t" style="top:807px;left:283.00px;"><span class="w" style="width:9px;letter-spacing:-0.504px">0:</span><span class="sp" style="width:3px"></span><span class="w" style="width:43px;letter-spacing:-0.113px">Justified</span></div>
<div class="t" style="top:807px;left:345.00px;letter-spacing:-0.674px;">31</div>
<div class="t" style="top:807px;left:373.00px;letter-spacing:-0.674px;">31</div>
<div class="t" style="top:807px;left:401.00px;letter-spacing:-0.674px;">31</div>
<div class="t" style="top:807px;left:429.00px;letter-spacing:-0.674px;">9</div>
<div class="t" style="top:807px;left:457.00px;letter-spacing:-0.674px;">31</div>
<div class="t" style="top:807px;left:485.00px;letter-spacing:-0.674px;">31</div>
<div class="t" style="top:807px;left:513.02px;letter-spacing:-0.334px;">Dark</div>
<div class="t" style="top:807px;left:557.00px;letter-spacing:-0.674px;">59</div>
<div class="t" style="top:807px;left:597.00px;letter-spacing:1.004px;">-</div>
<div class="t" style="top:807px;left:642.98px;"><span class="w" style="width:25px;letter-spacing:0.065px">Alert</span><span class="sp" style="width:3px"></span><span class="w" style="width:11px;letter-spacing:0.496px">to</span><span class="sp" style="width:3px"></span><span class="w" style="width:38px;letter-spacing:-0.116px">sounds</span></div>
<div class="t" style="top:837px;left:26.00px;letter-spacing:-0.674px;">59</div>
<div class="t" style="top:837px;left:83.02px;color:#fff;"><span class="w" style="width:9px;letter-spacing:0.334px">H</span><span class="sp" style="width:3px"></span><span class="w" style="width:12px;letter-spacing:-0.674px">84</span></div>
<div class="t" style="top:837px;left:125.02px;letter-spacing:-0.881px;">E48762B7</div>
<div class="t" style="top:837px;left:192.02px;letter-spacing:0.330px;">No</div>
<div class="t" style="top:837px;left:226.81px;letter-spacing:-0.201px;">Jolly</div>
<div class="t" style="top:837px;left:283.09px;"><span class="w" style="width:9px;letter-spacing:-0.504px">1:</span><span class="sp" style="width:3px"></span><span class="w" style="width:43px;letter-spacing:-0.113px">Justified</span></div>
<div class="t" style="top:837px;left:345.00px;letter-spacing:-0.674px;">31</div>
<div class="t" style="top:837px;left:373.00px;letter-spacing:-0.674px;">31</div>
<div class="t" style="top:837px;left:401.00px;letter-spacing:-0.674px;">31</div>
<div class="t" style="top:837px;left:429.00px;letter-spacing:-0.674px;">9</div>
<div class="t" style="top:837px;left:457.00px;letter-spacing:-0.674px;">31</div>
<div class="t" style="top:837px;left:485.00px;letter-spacing:-0.674px;">31</div>
<div class="t" style="top:837px;left:513.02px;letter-spacing:-0.334px;">Dark</div>
<div class="t" style="top:837px;left:557.00px;letter-spacing:-0.674px;">59</div>
<div class="t" style="top:837px;left:597.00px;letter-spacing:1.004px;">-</div>
<div class="t" style="top:837px;left:643.00px;"><span class="w" style="width:55px;letter-spacing:-0.212px">Somewhat</span><span class="sp" style="width:3px"></span><span class="w" style="width:22px;letter-spacing:-0.003px">vain</span></div>
<div class="t" style="top:867px;left:26.00px;letter-spacing:-0.674px;">60</div>
<div class="t" style="top:867px;left:83.02px;"><span class="w" style="width:9px;letter-spacing:0.334px">H</span><span class="sp" style="width:3px"></span><span class="w" style="width:12px;letter-spacing:-0.674px">81</span></div>
<div class="t" style="top:867px;left:125.02px;letter-spacing:-0.672px;">DEA308A7</div>
<div class="t" style="top:867px;left:192.02px;letter-spacing:0.330px;">No</div>
<div class="t" style="top:867px;left:226.81px;letter-spacing:-0.201px;">Jolly</div>
<div class="t" style="top:867px;left:283.09px;"><span class="w" style="width:9px;letter-spacing:-0.504px">1:</span><span class="sp" style="width:3px"></span><span class="w" style="width:43px;letter-spacing:-0.113px">Justified</span></div>
<div class="t" style="top:867px;left:345.00px;letter-spacing:-0.674px;">31</div>
<div class="t" style="top:867px;left:373.00px;letter-spacing:-0.674px;">31</div>
<div class="t" style="top:867px;left:401.00px;letter-spacing:-0.674px;">31</div>
<div class="t" style="top:867px;left:429.00px;letter-spacing:-0.674px;">9</div>
<div class="t" style="top:867px;left:457.00px;letter-spacing:-0.674px;">31</div>
<div class="t" style="top:867px;left:485.00px;letter-spacing:-0.674px;">31</div>
<div class="t" style="top:867px;left:513.02px;letter-spacing:-0.334px;">Dark</div>
<div class="t" style="top:867px;left:557.00px;letter-spacing:-0.674px;">59</div>
<div class="t" style="top:867px;left:597.00px;letter-spacing:1.004px;">-</div>
<div class="t" style="top:867px;left:643.00px;"><span class="w" style="width:55px;letter-spacing:-0.212px">Somewhat</span><span class="sp" style="width:3px"></span><span class="w" style="width:22px;letter-spacing:-0.003px">vain</span></div>
<div class="t" style="top:897px;left:26.00px;letter-spacing:-0.674px;">61</div>
<div class="t" style="top:897px;left:83.02px;"><span class="w" style="width:20px;letter-spacing:0.669px">MH</span><span class="sp" style="width:3px"></span><span class="w" style="width:12px;letter-spacing:-0.674px">76</span></div>
<div class="t" style="top:897px;left:125.02px;letter-spacing:-1.171px;">EBCC820B</div>
<div class="t" style="top:897px;left:192.02px;letter-spacing:0.330px;">No</div>
<div class="t" style="top:897px;left:226.81px;letter-spacing:-0.201px;">Jolly</div>
<div class="t" style="top:897px;left:283.00px;"><span class="w" style="width:9px;letter-spacing:-0.504px">0:</span><span class="sp" style="width:3px"></span><span class="w" style="width:43px;letter-spacing:-0.113px">Justified</span></div>
<div class="t" style="top:897px;left:345.00px;letter-spacing:-0.674px;">31</div>
<div class="t" style="top:897px;left:373.00px;letter-spacing:-0.674px;">31</div>
<div class="t" style="top:897px;left:401.00px;letter-spacing:-0.674px;">31</div>
<div class="t" style="top:897px;left:429.00px;letter-spacing:-0.674px;">9</div>
<div class="t" style="top:897px;left:457.00px;letter-spacing:-0.674px;">31</div>
<div class="t" style="top:897px;left:485.00px;letter-spacing:-0.674px;">31</div>
<div class="t" style="top:897px;left:513.02px;letter-spacing:-0.334px;">Dark</div>
<div class="t" style="top:897px;left:557.00px;letter-spacing:-0.674px;">59</div>
<div class="t" style="top:897px;left:597.00px;letter-spacing:1.004px;">-</div>
<div class="t" style="top:897px;left:643.02px;"><span class="w" style="width:26px;letter-spacing:-0.403px">Likes</span><span class="sp" style="width:3px"></span><span class="w" style="width:11px;letter-spacing:0.496px">to</span><span class="sp" style="width:3px"></span><span class="w" style="width:33px;letter-spacing:-0.059px">thrash</span><span class="sp" style="width:3px"></span><span class="w" style="width:31px;letter-spacing:0.194px">about</span></div>
<div class="" style="left:73px;top:553px;width:55px;height:313px;border:7px solid #ff0000;"></div>
</body>
</html>
